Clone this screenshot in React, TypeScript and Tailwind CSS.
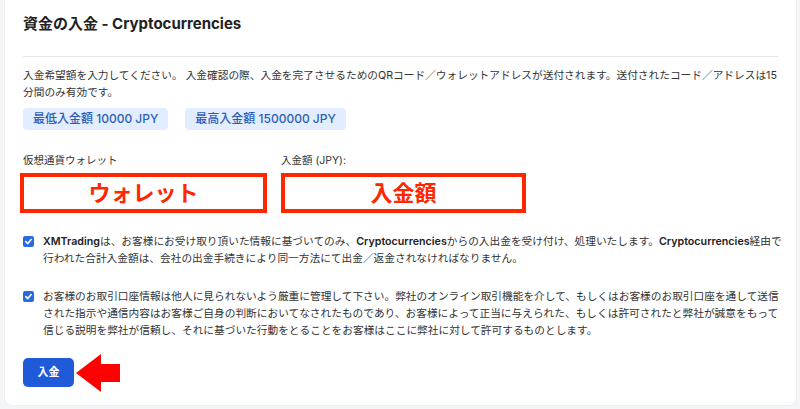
import React from "react";

const font = { fontFamily: 'Inter, "Liberation Sans", "Noto Sans CJK JP", sans-serif' };

function Check() {
  return (
    <div className="w-[11px] h-[11px] rounded-[2px] bg-[#2a6ae0] flex items-center justify-center shrink-0 mt-[3px]">
      <svg width="9" height="9" viewBox="0 0 10 10">
        <path d="M2 5.2 L4.2 7.3 L8 2.8" fill="none" stroke="white" strokeWidth="1.8" strokeLinecap="round" strokeLinejoin="round" />
      </svg>
    </div>
  );
}

export default function App() {
  return (
    <div className="w-[800px] h-[409px] bg-[#f4f5f7] pl-[4px] pr-[3px] pb-[3px] overflow-hidden" style={font}>
      <div className="bg-white h-full rounded-b-[8px] border-x border-b border-[#eceef1] px-[18px]">
        <div className="h-[57px] border-b border-[#e4e5e8] pt-[14px]">
          <h1 className="text-[15px] leading-[20px] font-bold text-[#222]">資金の入金 - Cryptocurrencies</h1>
        </div>
        <p className="mt-[10px] text-[10.7px] leading-[17px] text-[#333] whitespace-nowrap">
          入金希望額を入力してください。 入金確認の際、入金を完了させるためのQRコード／ウォレットアドレスが送付されます。送付されたコード／アドレスは15<br />分間のみ有効です。
        </p>
        <div className="mt-[7px] flex gap-[17px]">
          <span className="h-[22px] px-[10px] flex items-center whitespace-nowrap rounded-[4px] bg-[#e2eeff] text-[#2d5db6] text-[12px] font-medium">最低入金額 10000 JPY</span>
          <span className="h-[22px] px-[10px] flex items-center whitespace-nowrap rounded-[4px] bg-[#e2eeff] text-[#2d5db6] text-[12px] font-medium">最高入金額 1500000 JPY</span>
        </div>
        <div className="mt-[23px] flex">
          <div className="w-[258px]">
            <div className="text-[10.5px] leading-[16px] text-[#333]">仮想通貨ウォレット</div>
            <div className="mt-[4px] -ml-[3px] w-[247px] h-[40px] border-[4px] border-[#ff2600] flex items-center justify-center text-[#ff2600] text-[22px] font-bold">ウォレット</div>
          </div>
          <div>
            <div className="text-[10.5px] leading-[16px] text-[#333]">入金額 (JPY):</div>
            <div className="mt-[4px] w-[245px] h-[40px] border-[4px] border-[#ff2600] flex items-center justify-center text-[#ff2600] text-[22px] font-bold">入金額</div>
          </div>
        </div>
        <div className="mt-[20px] flex gap-[9px]">
          <Check />
          <p className="text-[10.7px] leading-[17px] text-[#333] whitespace-nowrap">
            <span className="font-semibold text-[#222]">XMTrading</span>は、お客様にお受け取り頂いた情報に基づいてのみ、<span className="font-semibold text-[#222]">Cryptocurrencies</span>からの入出金を受け付け、処理いたします。<span className="font-semibold text-[#222]">Cryptocurrencies</span>経由で<br />行われた合計入金額は、会社の出金手続きにより同一方法にて出金／返金されなければなりません。
          </p>
        </div>
        <div className="mt-[21px] flex gap-[9px]">
          <Check />
          <p className="text-[10.7px] leading-[17px] text-[#333] whitespace-nowrap">
            お客様のお取引口座情報は他人に見られないよう厳重に管理して下さい。弊社のオンライン取引機能を介して、もしくはお客様のお取引口座を通して送信<br />された指示や通信内容はお客様ご自身の判断においてなされたものであり、お客様によって正当に与えられた、もしくは許可されたと弊社が誠意をもって<br />信じる説明を弊社が信頼し、それに基づいた行動をとることをお客様はここに弊社に対して許可するものとします。
          </p>
        </div>
        <div className="mt-[19px] relative w-[51px] h-[29px]">
          <button className="block w-[51px] h-[29px] rounded-[5px] bg-[#1f5bd9] text-white text-[11px] font-bold">入金</button>
          <svg className="absolute left-[49px] top-[-7px]" width="54" height="46" viewBox="0 0 54 46">
            <polygon points="4,22 29,3 29,13 48,13 48,31 29,31 29,41" fill="#ff0000" stroke="white" strokeWidth="4" strokeLinejoin="round" style={{ paintOrder: "stroke" }} />
          </svg>
        </div>
      </div>
    </div>
  );
}
